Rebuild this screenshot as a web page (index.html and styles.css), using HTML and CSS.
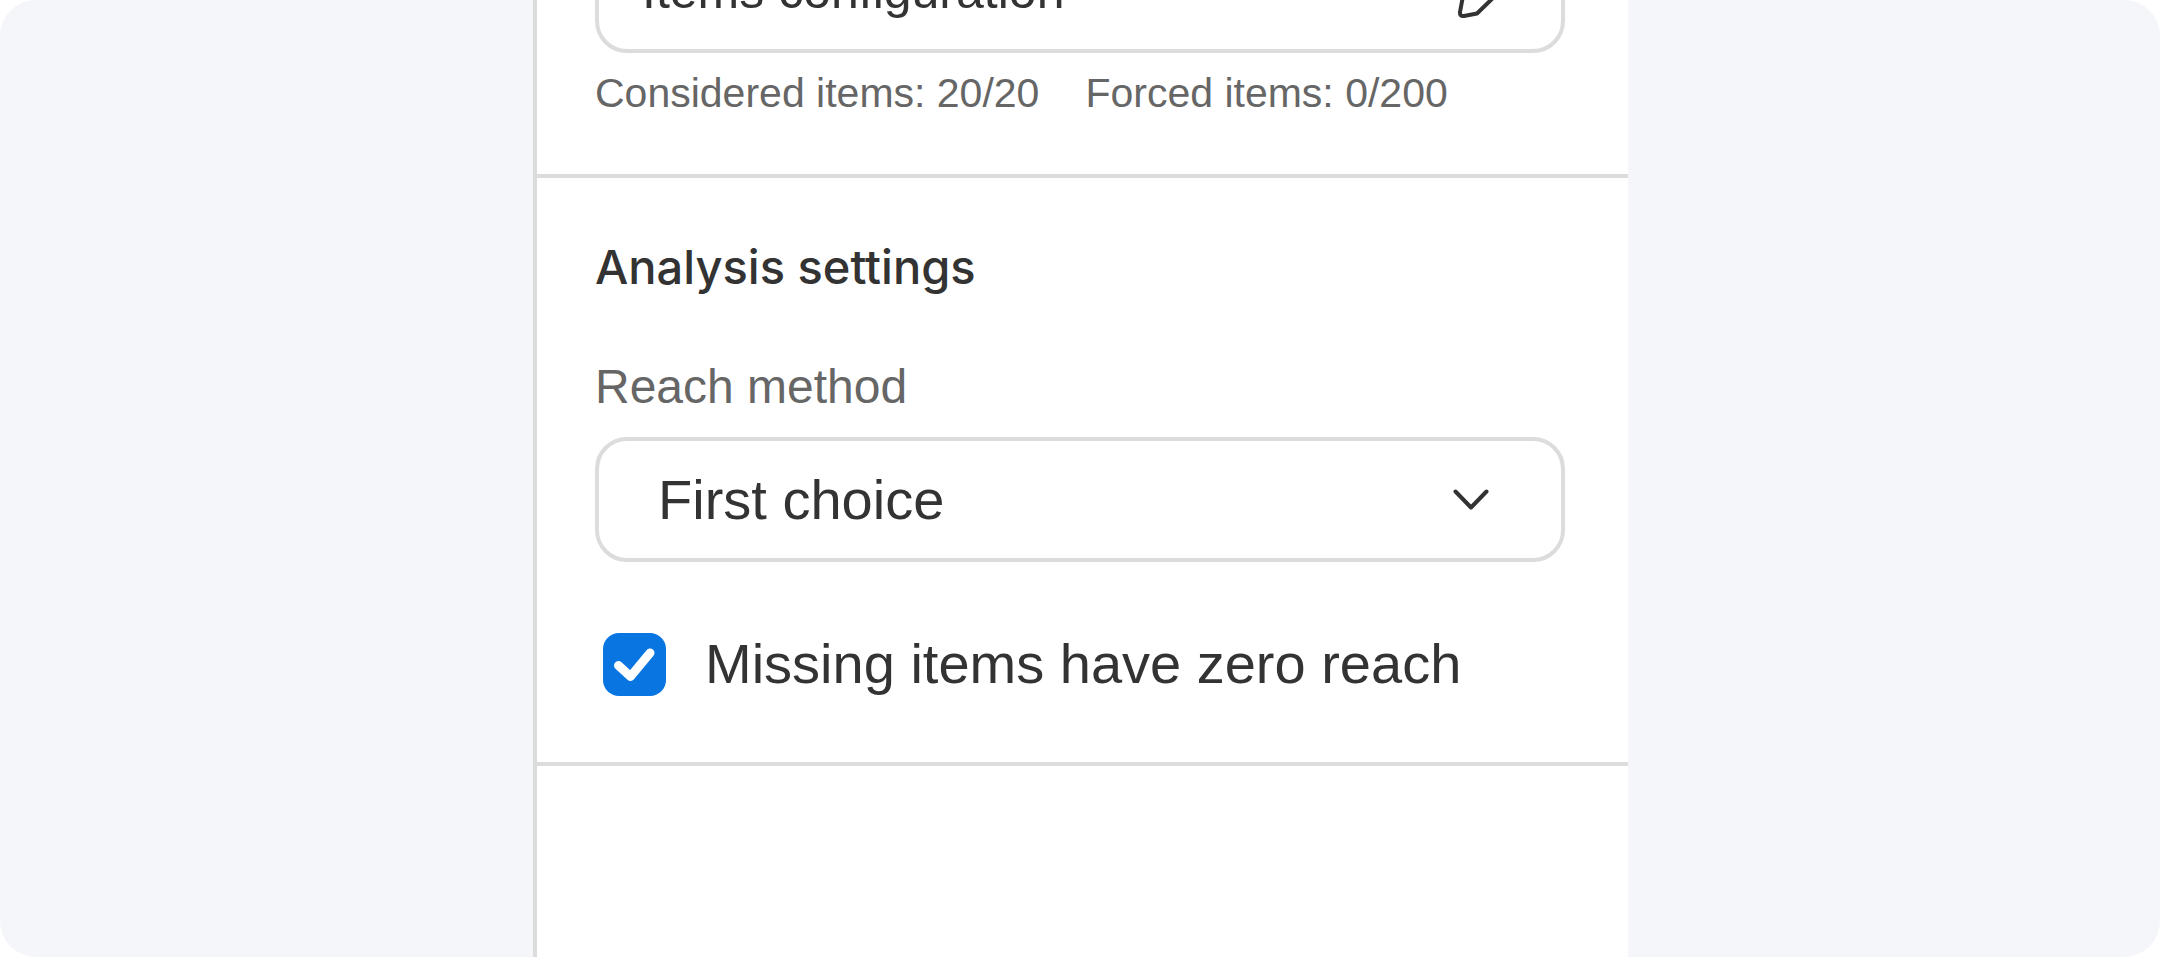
FILE: index.html
```html
<!DOCTYPE html>
<html lang="en">
<head>
<meta charset="utf-8">
<meta name="viewport" content="width=device-width, initial-scale=1">
<title>Analysis settings</title>
<link rel="stylesheet" href="styles.css">
</head>
<body>
<main class="stage">
  <div class="panel">
    <section class="section section-items">
      <button class="field config-button" type="button">
        <span>Items configuration</span>
        <svg class="pencil" viewBox="0 0 64 64" aria-hidden="true"><path d="M28 54.500 15 57Q10.500 57.500 11 53L14 37 43 8q5-5 10 0t0 10L45 38Z"/></svg>
      </button>
      <div class="counts">
        <span>Considered items: 20/20</span>
        <span>Forced items: 0/200</span>
      </div>
    </section>
    <section class="section section-analysis">
      <h2 class="heading">Analysis settings</h2>
      <label class="label" for="reach">Reach method</label>
      <div class="select-wrap">
        <select class="field select" id="reach"><option>First choice</option></select>
        <svg class="chevron" viewBox="0 0 48 48" aria-hidden="true"><path d="M8.500 16.500 24 32.500 39.500 16.500"/></svg>
      </div>
      <div class="check-row">
        <span class="check-wrap">
          <input class="checkbox" type="checkbox" id="missing" checked>
          <svg class="tick" viewBox="0 0 63 63" aria-hidden="true"><path d="M15.500 32.500 27.500 43.500 47 20"/></svg>
        </span>
        <label for="missing">Missing items have zero reach</label>
      </div>
    </section>
  </div>
</main>
</body>
</html>
```
FILE: styles.css
```css
* { box-sizing: border-box; }

body {
  margin: 0;
  background: #fff;
  color: #333;
  font-family: "Liberation Sans", Arial, sans-serif;
}

.stage {
  display: grid;
  grid-template-columns: 533fr 1095fr 532fr;
  height: 100vh;
  overflow: hidden;
  border-radius: 36px;
  background: #f4f6fa;
}

.panel {
  grid-column: 2;
  border-left: 4px solid #dcdcdc;
  background: #fff;
}

.section {
  display: flex;
  flex-direction: column;
  padding: 0 63px 0 58px;
  border-bottom: 4px solid #dcdcdc;
}

/* The panel is scrolled, so the first field starts above the view. */
.section-items {
  margin-top: -72px;
  padding-bottom: 57px;
}

.section-analysis {
  padding-top: 61px;
  padding-bottom: 66px;
}

.field {
  width: 100%;
  height: 125px;
  border: 4px solid #dcdcdc;
  border-radius: 32px;
  background: #fff;
  color: #333;
  font-family: inherit;
}

.config-button {
  display: flex;
  align-items: center;
  justify-content: space-between;
  padding: 0 48px 0 43px;
  font-size: 50px;
}

.pencil,
.chevron,
.tick {
  fill: none;
  stroke: #333;
  stroke-width: 4;
  stroke-linecap: round;
  stroke-linejoin: round;
}

.pencil {
  width: 64px;
  height: 64px;
}

.counts {
  display: flex;
  gap: 46px;
  margin-top: 16px;
  color: #666;
  font-size: 41px;
  line-height: 48px;
}

.heading {
  margin: 0;
  font-family: Inter, sans-serif;
  font-size: 47px;
  font-weight: 500;
  line-height: 56px;
}

.label {
  margin: 64px 0 22px;
  color: #666;
  font-size: 48px;
  line-height: 56px;
}

.select-wrap,
.check-wrap {
  position: relative;
  display: flex;
}

.select {
  appearance: none;
  padding: 0 130px 0 59px;
  font-size: 56px;
}

.chevron {
  position: absolute;
  top: 38px;
  right: 70px;
  width: 48px;
  height: 48px;
  pointer-events: none;
}

.check-row {
  display: flex;
  align-items: center;
  gap: 39px;
  margin-top: 70px;
  padding-left: 8px;
  font-size: 56px;
  line-height: 64px;
}

.checkbox {
  appearance: none;
  width: 63px;
  height: 63px;
  margin: 0;
  border-radius: 16px;
  background: #0875e1;
}

.tick {
  position: absolute;
  inset: 0;
  stroke: #fff;
  stroke-width: 9;
  pointer-events: none;
}

.checkbox:not(:checked) + .tick { display: none; }
```
